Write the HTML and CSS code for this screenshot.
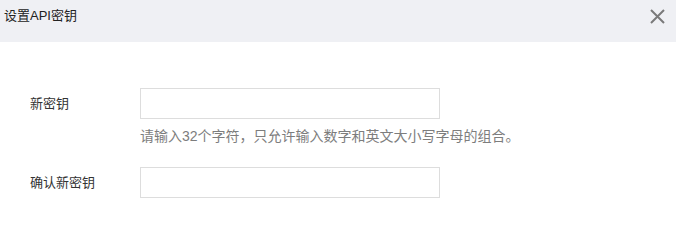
FILE: index.html
```html
<!DOCTYPE html>
<html lang="zh-CN">
<head>
<meta charset="utf-8">
<link rel="stylesheet" href="styles.css">
</head>
<body>
<div class="dialog">
  <div class="header">
    <span class="title">设置API密钥</span>
    <span class="close" aria-label="关闭">
      <svg width="15" height="15" viewBox="0 0 15 15"><path d="M1 1L14 14M14 1L1 14" stroke="#7a7a7a" stroke-width="2" fill="none"/></svg>
    </span>
  </div>
  <div class="form">
    <div class="row">
      <label class="label">新密钥</label>
      <div class="field">
        <input class="input" type="password">
        <div class="hint">请输入32个字符，只允许输入数字和英文大小写字母的组合。</div>
      </div>
    </div>
    <div class="row row2">
      <label class="label">确认新密钥</label>
      <div class="field">
        <input class="input" type="password">
      </div>
    </div>
  </div>
</div>
</body>
</html>
```

FILE: styles.css
```css
html, body {
  margin: 0;
  padding: 0;
  background: #ffffff;
}
body {
  font-family: "Liberation Sans", "Noto Sans CJK SC", sans-serif;
  color: #333333;
}
.dialog {
  width: 676px;
}
.header {
  box-sizing: border-box;
  height: 42px;
  background: #eff0f4;
  display: flex;
  justify-content: space-between;
  align-items: flex-start;
  padding: 6px 11px 0 4px;
}
.title {
  font-size: 13px;
  line-height: 20px;
  color: #222222;
}
.close {
  display: block;
  width: 15px;
  height: 15px;
  margin-top: 3px;
}
.close svg {
  display: block;
}
.form {
  padding: 46px 0 0 30px;
}
.row {
  display: grid;
  grid-template-columns: 110px 300px;
  align-items: start;
}
.row2 {
  margin-top: 21px;
}
.label {
  font-size: 13px;
  line-height: 31px;
  color: #333333;
}
.field {
  display: flex;
  flex-direction: column;
}
.input {
  box-sizing: border-box;
  width: 300px;
  height: 31px;
  margin: 0;
  border: 1px solid #dddddd;
  background: #ffffff;
  outline: none;
  padding: 0 8px;
}
.hint {
  margin-top: 7px;
  font-size: 14px;
  line-height: 20px;
  color: #7d7d7d;
  white-space: nowrap;
}
```
